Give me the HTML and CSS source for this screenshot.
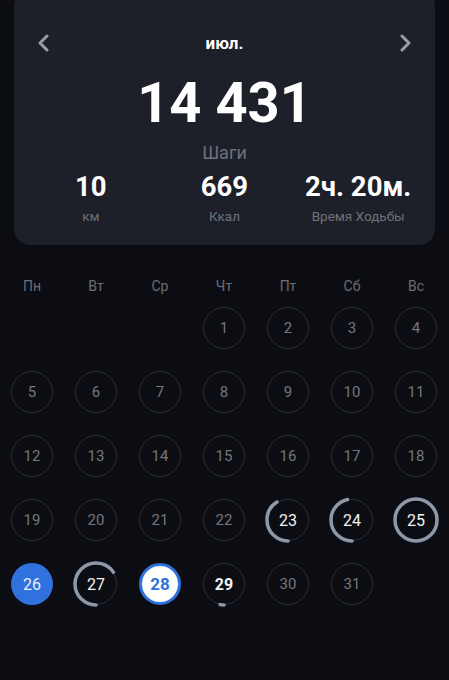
FILE: index.html
```html
<!DOCTYPE html>
<html lang="ru">
<head>
<meta charset="utf-8">
<link rel="stylesheet" href="styles.css">
</head>
<body>
<div class="card">
  <div class="head">
    <svg class="chev" width="12" height="20" viewBox="0 0 12 20"><polyline points="10,3 3,10 10,17"/></svg>
    <div class="month">июл.</div>
    <svg class="chev" width="12" height="20" viewBox="0 0 12 20"><polyline points="2,3 9,10 2,17"/></svg>
  </div>
  <div class="steps">14 431</div>
  <div class="steps-label">Шаги</div>
  <div class="stats">
    <div class="stat"><div class="val">10</div><div class="lbl">км</div></div>
    <div class="stat"><div class="val">669</div><div class="lbl">Ккал</div></div>
    <div class="stat"><div class="val">2ч. 20м.</div><div class="lbl">Время Ходьбы</div></div>
  </div>
</div>

<div class="weekdays">
  <div>Пн</div><div>Вт</div><div>Ср</div><div>Чт</div><div>Пт</div><div>Сб</div><div>Вс</div>
</div>

<div class="grid">
  <div class="day"></div><div class="day"></div><div class="day"></div>
  <div class="day"><span class="num">1</span></div>
  <div class="day"><span class="num">2</span></div>
  <div class="day"><span class="num">3</span></div>
  <div class="day"><span class="num">4</span></div>

  <div class="day"><span class="num">5</span></div>
  <div class="day"><span class="num">6</span></div>
  <div class="day"><span class="num">7</span></div>
  <div class="day"><span class="num">8</span></div>
  <div class="day"><span class="num">9</span></div>
  <div class="day"><span class="num">10</span></div>
  <div class="day"><span class="num">11</span></div>

  <div class="day"><span class="num">12</span></div>
  <div class="day"><span class="num">13</span></div>
  <div class="day"><span class="num">14</span></div>
  <div class="day"><span class="num">15</span></div>
  <div class="day"><span class="num">16</span></div>
  <div class="day"><span class="num">17</span></div>
  <div class="day"><span class="num">18</span></div>

  <div class="day"><span class="num">19</span></div>
  <div class="day"><span class="num">20</span></div>
  <div class="day"><span class="num">21</span></div>
  <div class="day"><span class="num">22</span></div>
  <div class="day"><span class="num active">23</span>
    <svg class="ring" viewBox="0 0 48 48"><circle class="prog" cx="24" cy="24" r="21" stroke-dasharray="54 200"/></svg></div>
  <div class="day"><span class="num active">24</span>
    <svg class="ring" viewBox="0 0 48 48"><circle class="prog" cx="24" cy="24" r="21" stroke-dasharray="61 200"/></svg></div>
  <div class="day"><span class="num active">25</span>
    <svg class="ring" viewBox="0 0 48 48"><circle class="prog" cx="24" cy="24" r="21" stroke-dasharray="140 200"/></svg></div>

  <div class="day"><span class="num selected">26</span></div>
  <div class="day"><span class="num active">27</span>
    <svg class="ring" viewBox="0 0 48 48"><circle class="prog" cx="24" cy="24" r="21" stroke-dasharray="86 200"/></svg></div>
  <div class="day"><span class="num today">28</span></div>
  <div class="day"><span class="num active bold">29</span>
    <svg class="ring" viewBox="0 0 48 48"><circle class="prog" cx="24" cy="24" r="21" stroke-dasharray="4 200"/></svg></div>
  <div class="day"><span class="num">30</span></div>
  <div class="day"><span class="num">31</span></div>
  <div class="day"></div>
</div>
</body>
</html>
```

FILE: styles.css
```css
html, body {
  margin: 0;
  padding: 0;
}
body {
  background: #0b0d12;
  font-family: Roboto, "Noto Sans", sans-serif;
  color: #ffffff;
  width: 449px;
  height: 680px;
  overflow: hidden;
}
.card {
  margin: -10px 14px 0;
  background: #1e2029;
  border-radius: 16px;
  padding: 42px 0 21px;
  text-align: center;
}
.head {
  display: flex;
  justify-content: space-between;
  align-items: center;
  height: 22px;
  padding: 0 23px;
}
.chev polyline {
  fill: none;
  stroke: #9a9da4;
  stroke-width: 3;
  stroke-linecap: round;
  stroke-linejoin: round;
}
.month {
  font-size: 17px;
  font-weight: 700;
  line-height: 22px;
}
.steps {
  margin-top: 17px;
  font-size: 56px;
  font-weight: 700;
  line-height: 64px;
}
.steps-label {
  margin-top: 7px;
  font-size: 18px;
  line-height: 22px;
  color: #6e717a;
}
.stats {
  margin-top: 8px;
  display: grid;
  grid-template-columns: repeat(3, 1fr);
  padding: 0 10px;
}
.val {
  font-size: 27.5px;
  font-weight: 700;
  line-height: 30px;
}
.lbl {
  margin-top: 6px;
  font-size: 13.5px;
  line-height: 16px;
  color: #6e717a;
}
.weekdays {
  margin-top: 31px;
  display: grid;
  grid-template-columns: repeat(7, 64px);
  height: 20px;
  line-height: 20px;
  font-size: 14px;
  color: #6b6e76;
  text-align: center;
}
.grid {
  display: grid;
  grid-template-columns: repeat(7, 64px);
  grid-auto-rows: 64px;
}
.day {
  position: relative;
  display: flex;
  align-items: center;
  justify-content: center;
}
.num {
  box-sizing: border-box;
  width: 42px;
  height: 42px;
  border-radius: 50%;
  border: 1.5px solid #2a2d34;
  display: flex;
  align-items: center;
  justify-content: center;
  font-size: 15px;
  color: #74777f;
}
.num.active {
  color: #f2f3f5;
  font-size: 16px;
}
.num.bold {
  font-weight: 700;
}
.num.selected {
  background: #2f72de;
  border: none;
  color: #e9effb;
  font-size: 16px;
}
.num.today {
  background: #ffffff;
  border: 3.5px solid #2f72de;
  color: #2f72de;
  font-weight: 700;
  font-size: 17px;
}
.ring {
  position: absolute;
  left: 8px;
  top: 8px;
  width: 48px;
  height: 48px;
  transform: rotate(90deg);
}
.prog {
  fill: none;
  stroke: #8d99a9;
  stroke-width: 3.5;
  stroke-linecap: round;
}
```
